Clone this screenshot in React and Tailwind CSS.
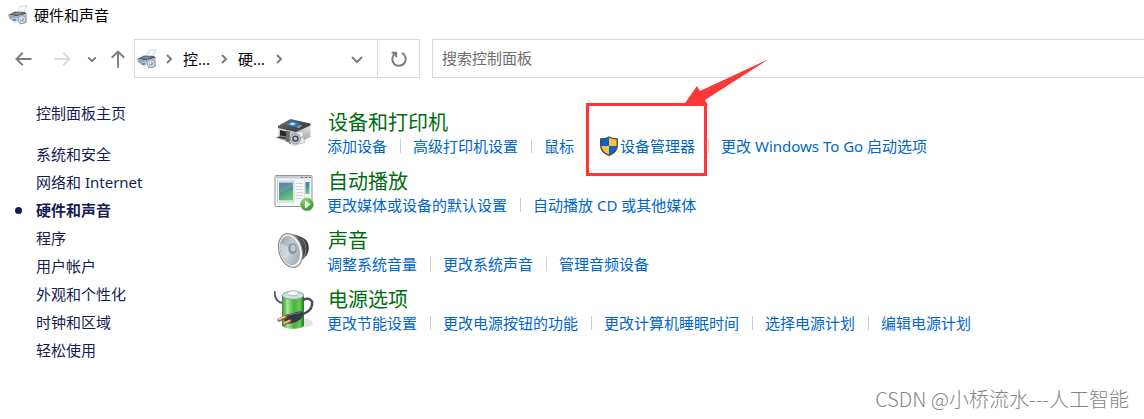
import React from "react";

const HardwareIcon = ({ className }) => (
  <svg viewBox="0 0 20 20" className={className} aria-hidden="true">
    <path d="M9 8 12 1.500l7-1-3.500 8z" fill="#f6f7f8" stroke="#c3c8cc" strokeWidth=".6" />
    <path d="M0 10 7 6.500l10 .5 2 2-9 2.500z" fill="#59636d" />
    <path d="M3 9 9 7.200l6 .5-5 2z" fill="#7f8a95" />
    <path d="M0 10 10 11.500v4L8 14l-6 .5z" fill="#9aa5af" />
    <path d="M2 14.500 8 12.500l3 1.500-3 3.500z" fill="#d3dbe1" />
    <path d="m3.500 14.500 4-1 1.500 1.500L6 16.500z" fill="#3f9be0" />
    <path d="m10.500 10.500 8.500-1.500v9l-7.500 1.500z" fill="#b9c3cc" />
    <circle cx="14" cy="14.600" r="4" fill="#dde5ec" stroke="#7a8794" strokeWidth=".8" />
    <circle cx="14" cy="14.600" r="2.200" fill="#86abcb" />
    <circle cx="13.400" cy="14" r=".9" fill="#eaf4fb" />
  </svg>
);

const PrinterIcon = () => (
  <svg viewBox="0 0 40 40" className="h-10 w-10" aria-hidden="true">
    <defs>
      <linearGradient id="prTop" x1="0" y1="0" x2="1" y2="1">
        <stop offset="0" stopColor="#6a6f74" />
        <stop offset="1" stopColor="#2f3337" />
      </linearGradient>
      <linearGradient id="prSide" x1="0" y1="0" x2="0" y2="1">
        <stop offset="0" stopColor="#e3e4e5" />
        <stop offset="1" stopColor="#9a9d9f" />
      </linearGradient>
    </defs>
    <g transform="translate(0 2)">
      <path d="M4 12 22 16v13L5 24z" fill="url(#prSide)" />
      <path d="M22 16 36.500 10.500V22L24 28z" fill="url(#prSide)" />
      <path d="M4 11 16.500 4 36.500 8.500v2L22 17 4 13z" fill="url(#prTop)" />
      <path d="m12 9.500 5-3 9 2-4.500 3.500z" fill="#2b83c6" />
      <path d="m15 9 3-1.500 4 1-3 2z" fill="#b9e2fa" />
      <path d="m22 12 4-2 2.500.8-4 2.200z" fill="#8fa3ad" />
      <path d="M6 15 14 17v7l-8-1.500z" fill="#24282b" />
      <path d="m1 22.500 5.500-2 7 1.500v4z" fill="#a3a6a8" />
      <path d="m3 22.500 4-1.200 5.500 1.500v1.700z" fill="#3a3e41" />
      <path d="m12 15.500 4 1v11.500l-4-1.500z" fill="#6a6e71" />
      <path d="m16 18.500 13-2.500 1.500 11.500-11 3-3.500-2.500z" fill="#ececeb" stroke="#a9a9a7" strokeWidth=".7" />
      <path d="m17 19 5-1v1.500l-5 1z" fill="#aeb1b2" />
      <circle cx="21.500" cy="23.800" r="5" fill="#d3d5d6" stroke="#7c8184" strokeWidth=".9" />
      <circle cx="21.500" cy="23.800" r="3.300" fill="#464f57" />
      <circle cx="21.500" cy="23.800" r="1.800" fill="#9fb5c5" />
      <circle cx="20.900" cy="23.200" r=".8" fill="#fff" />
      <path d="m27.500 21 2-.4v3l-2 .4z" fill="#b5b6b5" />
      <circle cx="16" cy="28" r="1" fill="#5fa85c" />
    </g>
  </svg>
);

const AutoPlayIcon = () => (
  <svg viewBox="0 0 40 40" className="h-10 w-10" aria-hidden="true">
    <defs>
      <linearGradient id="apPic" x1="0" y1="0" x2=".4" y2="1">
        <stop offset="0" stopColor="#3b759c" />
        <stop offset=".5" stopColor="#4a9590" />
        <stop offset="1" stopColor="#69c578" />
      </linearGradient>
      <radialGradient id="apBall" cx=".4" cy=".3" r=".8">
        <stop offset="0" stopColor="#8be06a" />
        <stop offset="1" stopColor="#1e8a1b" />
      </radialGradient>
    </defs>
    <rect x="1" y="3.500" width="37" height="31" rx="1" fill="#f6f7f8" stroke="#8d949b" />
    <path d="M1.500 4h36v2.500h-36z" fill="#c5cbd2" />
    <path d="M27 5.500h2M31 5.500h2M35 5.500h2" stroke="#6b7580" />
    <path d="M3.500 9h16.500v21H3.500z" fill="#fff" stroke="#b5bfc6" strokeWidth=".8" />
    <path d="M5 10.500h14v18H5z" fill="url(#apPic)" />
    <path d="M5 10.500h14v4C13 16 10 21 5 21z" fill="#fff" opacity=".12" />
    <path d="M22 11.500h7M22 14.500h7M22 17.500h7M22 20.500h7M22 23.500h7M22 26.500h6" stroke="#cfd4d8" />
    <path d="M30.500 8v26" stroke="#d5d9dc" strokeWidth=".7" />
    <path d="M31.500 10h4v12h-4z" fill="url(#apPic)" />
    <circle cx="33" cy="32.500" r="6.500" fill="url(#apBall)" stroke="#aeb5ae" strokeWidth=".9" />
    <path d="m31 28.500 5.500 4-5.500 4z" fill="#fff" />
  </svg>
);

const SpeakerIcon = () => (
  <svg viewBox="0 0 40 40" className="h-10 w-10" aria-hidden="true">
    <defs>
      <linearGradient id="spBack" x1="0" y1="0" x2="1" y2="0">
        <stop offset="0" stopColor="#8b8e90" />
        <stop offset=".5" stopColor="#55595b" />
        <stop offset="1" stopColor="#303336" />
      </linearGradient>
      <linearGradient id="spCone" x1="0" y1="0" x2="1" y2="1">
        <stop offset="0" stopColor="#8c989f" />
        <stop offset=".5" stopColor="#c2cdd3" />
        <stop offset="1" stopColor="#98a7b0" />
      </linearGradient>
    </defs>
    <path d="M15 3c5-.5 11 2 16 5 5 4 5 14 0 18-3 3-6 6-9 8z" fill="url(#spBack)" />
    <path d="M28 8c5 5 5 14 1 20" fill="none" stroke="#85898c" />
    <ellipse cx="16.500" cy="19.500" rx="11.500" ry="17.300" transform="rotate(-16 16.500 19.500)" fill="#f4f5f5" stroke="#8b9093" strokeWidth="1.200" />
    <ellipse cx="15.800" cy="19.500" rx="9.300" ry="14.600" transform="rotate(-16 15.800 19.500)" fill="url(#spCone)" stroke="#a7afb3" strokeWidth=".8" />
    <path d="M18 19 7 12c-2 6 0 13 4 17z" fill="#dce4e8" opacity=".6" />
    <ellipse cx="18.500" cy="17.500" rx="4.200" ry="5.500" fill="#81949f" />
    <ellipse cx="19" cy="17" rx="2.600" ry="3.600" fill="#b9cbd5" />
  </svg>
);

const PowerIcon = () => (
  <svg viewBox="0 0 40 40" className="h-10 w-10" aria-hidden="true">
    <defs>
      <linearGradient id="pwBody" x1="0" y1="0" x2="1" y2="0">
        <stop offset="0" stopColor="#348f31" />
        <stop offset=".25" stopColor="#a6e894" />
        <stop offset=".55" stopColor="#45b13b" />
        <stop offset=".8" stopColor="#67cb55" />
        <stop offset="1" stopColor="#1d7822" />
      </linearGradient>
    </defs>
    <ellipse cx="30" cy="33" rx="9" ry="4.500" fill="#e4e4e4" />
    <path d="M.5 1c0 6 2 11 8 12" fill="none" stroke="#5a6078" strokeWidth="2" />
    <path d="M8 5v30c0 5 22 5 22 0V5z" fill="url(#pwBody)" />
    <ellipse cx="19" cy="5.300" rx="10.700" ry="4" fill="#d5dee4" stroke="#85a489" />
    <ellipse cx="19" cy="3.300" rx="6" ry="2.500" fill="#f8fafb" stroke="#9daab6" strokeWidth=".8" />
    <path d="M29 10c6-3 10 0 9 5-1 6-5 7-9 9" fill="none" stroke="#454b60" strokeWidth="2.400" />
    <path d="m11 25 9-2c6-2 9-2 9 1 0 4-5 8-10 9l-5 1-4-4z" fill="#353947" />
    <path d="m12 25.500 10-2 5-1" fill="none" stroke="#777d8e" />
    <path d="m12 27-7 3M16 31l-6 3" fill="none" stroke="#8b6332" strokeWidth="3.200" strokeLinecap="round" />
    <path d="m11 26.500-6 3M15.500 30.500l-5.500 3" fill="none" stroke="#ecca91" strokeWidth="1.500" strokeLinecap="round" />
  </svg>
);

const ShieldIcon = () => (
  <svg viewBox="1 0 18 20" className="h-5 w-[18px] shrink-0" aria-hidden="true">
    <path d="M10 1C7.500 2.500 4 3 1.500 3v6C1.500 14 5 17.500 10 19.500 15 17.500 18.500 14 18.500 9V3C16 3 12.500 2.500 10 1z" fill="#0b63c7" />
    <path d="M10 1c2.500 1.500 6 2 8.500 2v7H10z" fill="#ffc03a" />
    <path d="M1.500 10H10v9.500C5 17.500 2 14.500 1.500 10z" fill="#ffc03a" />
    <path d="M10 1C7.500 2.500 4 3 1.700 3v6C1.700 14 5 17.500 10 19.300 15 17.500 18.300 14 18.300 9V3C16 3 12.500 2.500 10 1z" fill="none" stroke="#4a4d50" strokeWidth="1.400" />
  </svg>
);

const Stroke = ({ d, className, width = 2 }) => (
  <svg viewBox="0 0 16 16" className={className} fill="none" stroke="currentColor" strokeWidth={width} aria-hidden="true">
    <path d={d} />
  </svg>
);

const CHEVRON_RIGHT = "m6 4 4 4-4 4";
const CHEVRON_DOWN = "m3 6 5 5 5-5";

const sidebar = ["系统和安全", "网络和 Internet", "硬件和声音", "程序", "用户帐户", "外观和个性化", "时钟和区域", "轻松使用"];
const current = "硬件和声音";

const categories = [
  { title: "设备和打印机", Icon: PrinterIcon, links: ["添加设备", "高级打印机设置", "鼠标", "设备管理器", "更改 Windows To Go 启动选项"] },
  { title: "自动播放", Icon: AutoPlayIcon, links: ["更改媒体或设备的默认设置", "自动播放 CD 或其他媒体"] },
  { title: "声音", Icon: SpeakerIcon, links: ["调整系统音量", "更改系统声音", "管理音频设备"] },
  { title: "电源选项", Icon: PowerIcon, links: ["更改节能设置", "更改电源按钮的功能", "更改计算机睡眠时间", "选择电源计划", "编辑电源计划"] },
];

const Highlight = () => (
  <>
    <span className="pointer-events-none absolute -top-8 -right-3 -left-3.5 h-[73px] border-3 border-[#fb3838]" />
    <svg viewBox="0 0 84 46" className="pointer-events-none absolute -top-[76px] left-[85px] h-[46px] w-[84px]" aria-hidden="true">
      <path d="M84 0 15 32 12 27 0 44v2h23l-3-5z" fill="#fb3838" />
    </svg>
  </>
);

const TaskLink = ({ label }) =>
  label === "设备管理器" ? (
    <span className="relative flex items-center">
      <a href="#device-manager" className="flex items-center gap-0.5 hover:underline">
        <ShieldIcon />
        {label}
      </a>
      <Highlight />
    </span>
  ) : (
    <a href="#task" className="hover:underline">{label}</a>
  );

export default function App() {
  return (
    <div className="flex min-h-screen flex-col overflow-x-hidden bg-white font-['Noto_Sans','Noto_Sans_CJK_SC',sans-serif] text-[15px] leading-[22px] text-black">
      <header>
        <div className="flex h-[30px] items-center gap-1.5 pl-2">
          <HardwareIcon className="h-5 w-5" />
          <h1>硬件和声音</h1>
        </div>
        <div className="mt-[9px] flex h-[39px]">
          <nav className="flex w-[134px] shrink-0 items-center pl-[14px] text-[#7c7c7c]">
            <button type="button" aria-label="后退" className="mr-[18px]">
              <Stroke className="h-5 w-5" width={1.5} d="M14 8H2m5-5L2 8l5 5" />
            </button>
            <button type="button" aria-label="前进" className="mr-[14px] text-[#dadada]">
              <Stroke className="h-5 w-5" width={1.5} d="M2 8h12M9 3l5 5-5 5" />
            </button>
            <button type="button" aria-label="最近浏览的位置" className="mr-2.5">
              <Stroke className="h-3 w-3" width={2.5} d={CHEVRON_DOWN} />
            </button>
            <button type="button" aria-label="上移">
              <Stroke className="h-5 w-5" width={1.5} d="M8 15V2M3 7l5-5 5 5" />
            </button>
          </nav>
          <div className="flex w-[286px] shrink-0 items-center border border-[#d9d9d9]">
            <HardwareIcon className="ml-0.5 h-5 w-5" />
            <Stroke className="ml-1 h-4 w-4 text-[#7c7c7c]" d={CHEVRON_RIGHT} />
            <button type="button" className="ml-1.5">控...</button>
            <Stroke className="ml-1.5 h-4 w-4 text-[#7c7c7c]" d={CHEVRON_RIGHT} />
            <button type="button" className="ml-1.5">硬...</button>
            <Stroke className="ml-1.5 h-4 w-4 text-[#7c7c7c]" d={CHEVRON_RIGHT} />
            <button type="button" aria-label="以前的位置" className="mr-3 ml-auto text-[#7c7c7c]">
              <Stroke className="h-4 w-4" d={CHEVRON_DOWN} />
            </button>
            <button type="button" aria-label="刷新" className="flex h-full w-[42px] items-center justify-center border-l border-[#d9d9d9] text-[#7c7c7c]">
              <Stroke className="h-[18px] w-[18px]" width={1.8} d="M10.500 2.600A6 6 0 1 1 4.500 3.200M1.500 2.500H5.500v4" />
            </button>
          </div>
          <input
            type="search"
            aria-label="搜索控制面板"
            placeholder="搜索控制面板"
            className="ml-3 min-w-0 flex-1 border border-r-0 border-[#d9d9d9] pb-0.5 pl-[9px] outline-none placeholder:text-[#6d6d6d]"
          />
        </div>
      </header>

      <div className="flex">
        <aside className="w-[274px] shrink-0 pt-[21px] pl-9 text-[#151c55]">
          <a href="#home" className="block leading-7">控制面板主页</a>
          <ul className="mt-[13px]">
            {sidebar.map((item) => (
              <li key={item} className={item === current ? "relative leading-7 font-bold" : "leading-7"}>
                {item === current && <span className="absolute top-[11px] -left-[21px] h-[7px] w-[7px] rounded-full bg-[#151c55]" />}
                <a href="#category">{item}</a>
              </li>
            ))}
          </ul>
        </aside>

        <main className="flex min-w-0 flex-1 flex-col gap-[13px] pt-[33px]">
          {categories.map(({ title, Icon, links }) => (
            <section key={title} className="flex gap-3.5">
              <div className="h-[46px] shrink-0 pt-0.5">
                <Icon />
              </div>
              <div>
                <h2 className="text-xl leading-6 text-[#006b10]">
                  <a href="#section">{title}</a>
                </h2>
                <ul className="-ml-px flex flex-wrap text-[#0066cc]">
                  {links.map((label, i) => (
                    <li key={label} className="flex items-center">
                      {i > 0 && <span className="mr-3 ml-[13px] h-3.5 w-px bg-[#cfcfcf]" />}
                      <TaskLink label={label} />
                    </li>
                  ))}
                </ul>
              </div>
            </section>
          ))}
        </main>
      </div>

      <footer className="mt-auto pr-[15px] pb-1.5 text-right font-['Noto_Sans_CJK_SC',sans-serif] text-xl leading-7 font-light text-[#858585]">
        CSDN @小桥流水---人工智能
      </footer>
    </div>
  );
}
